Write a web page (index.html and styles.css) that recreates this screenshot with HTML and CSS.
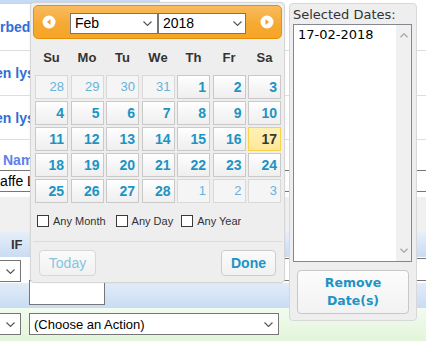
FILE: index.html
```html
<!DOCTYPE html>
<html lang="en">
<head>
  <meta charset="UTF-8" />
  <title>Date picker</title>
  <link rel="stylesheet" href="styles.css">
</head>
<body>
  <!-- page behind the popup -->
  <div class="page">
    <div class="topbar"></div>
    <div class="field-row row-1"><span class="field-label">Absorbed</span></div>
    <div class="field-row row-2"><span class="field-label">Taken lysis</span></div>
    <div class="field-row row-3"><span class="field-label">Taken lysis</span></div>
    <div class="name-block">
      <div class="name-label">Name</div>
      <div class="text-input">Caffe L</div>
    </div>
    <div class="gray-band"></div>
    <div class="grid-head"><span class="grid-th">IF</span></div>
    <div class="grid-row row-white">
      <div class="sel sel-small"><span></span><svg class="chev" viewBox="0 0 9 5"><polyline points="0.5,0.5 4.5,4.5 8.5,0.5"/></svg></div>
      <div class="wide-input"></div>
    </div>
    <div class="grid-row row-blue">
      <div class="white-box"></div>
    </div>
    <div class="grid-row row-green">
      <div class="sel sel-small"><span></span><svg class="chev" viewBox="0 0 9 5"><polyline points="0.5,0.5 4.5,4.5 8.5,0.5"/></svg></div>
      <div class="sel sel-action"><span>(Choose an Action)</span><svg class="chev" viewBox="0 0 9 5"><polyline points="0.5,0.5 4.5,4.5 8.5,0.5"/></svg></div>
    </div>
  </div>

  <!-- DATEPICKER POPUP -->
  <div class="dp">
    <div class="dp-header">
      <span class="dp-nav dp-prev"><svg viewBox="0 0 14 14"><circle cx="7" cy="7" r="6.5"/><polygon points="8.5,4 8.5,10 5,7"/></svg></span>
      <div class="sel sel-month"><span>Feb</span><svg class="chev" viewBox="0 0 9 5"><polyline points="0.5,0.5 4.5,4.5 8.5,0.5"/></svg></div>
      <div class="sel sel-year"><span>2018</span><svg class="chev" viewBox="0 0 9 5"><polyline points="0.5,0.5 4.5,4.5 8.5,0.5"/></svg></div>
      <span class="dp-nav dp-next"><svg viewBox="0 0 14 14"><circle cx="7" cy="7" r="6.5"/><polygon points="5.5,4 5.5,10 9,7"/></svg></span>
    </div>

    <div class="dp-days">
      <span>Su</span><span>Mo</span><span>Tu</span><span>We</span><span>Th</span><span>Fr</span><span>Sa</span>
    </div>

    <div class="dp-dates">
      <span class="d other">28</span><span class="d other">29</span><span class="d other">30</span><span class="d other">31</span><span class="d">1</span><span class="d">2</span><span class="d">3</span>
      <span class="d">4</span><span class="d">5</span><span class="d">6</span><span class="d">7</span><span class="d">8</span><span class="d">9</span><span class="d">10</span>
      <span class="d">11</span><span class="d">12</span><span class="d">13</span><span class="d">14</span><span class="d">15</span><span class="d">16</span><span class="d today">17</span>
      <span class="d">18</span><span class="d">19</span><span class="d">20</span><span class="d">21</span><span class="d">22</span><span class="d">23</span><span class="d">24</span>
      <span class="d">25</span><span class="d">26</span><span class="d">27</span><span class="d">28</span><span class="d other">1</span><span class="d other">2</span><span class="d other">3</span>
    </div>

    <div class="dp-options">
      <label class="opt"><span class="cb"></span>Any Month</label>
      <label class="opt"><span class="cb"></span>Any Day</label>
      <label class="opt"><span class="cb"></span>Any Year</label>
    </div>

    <div class="dp-buttons">
      <span class="btn btn-today">Today</span>
      <span class="btn btn-done">Done</span>
    </div>
  </div>

  <!-- SELECTED DATES PANEL -->
  <div class="sel-panel">
    <div class="sel-title">Selected Dates:</div>
    <div class="listbox">
      <div class="list-items"><div class="list-item">17-02-2018</div></div>
      <div class="list-scroll">
        <svg viewBox="0 0 9 5"><polyline points="0.5,4.5 4.5,0.5 8.5,4.5"/></svg>
        <svg viewBox="0 0 9 5"><polyline points="0.5,0.5 4.5,4.5 8.5,0.5"/></svg>
      </div>
    </div>
    <div class="remove-btn"><span>Remove</span><span>Date(s)</span></div>
  </div>
</body>
</html>
```

FILE: styles.css
```css
/* BASE */
* { box-sizing: border-box; }
body {
  margin: 0;
  width: 426px; height: 341px;
  overflow: hidden;
  position: relative;
  background: #fff;
  font-family: "Liberation Sans", Arial, sans-serif;
  color: #000;
}

/* PAGE BEHIND */
.page { margin-left: -60px; width: 540px; }
.topbar {
  width: 220px; height: 4px;
  background: #c6dbf4;
  border-bottom: 1px solid #d4d4d4;
}
.field-row {
  display: flex; align-items: center;
  border-bottom: 1px solid #dedede;
  font-size: 14px; font-weight: bold;
  color: #2f6fd5;
  white-space: nowrap;
}
.row-1 { height: 47px; padding-left: 25px; }
.row-2 { height: 45px; padding-left: 32px; }
.row-3 { height: 44px; padding-left: 32px; }

.name-block { height: 57px; padding-top: 12px; }
.name-label {
  padding-left: 63px;
  font-size: 14px; font-weight: bold;
  line-height: 16px;
  color: #5b80f0;
}
.text-input {
  margin: 2px 0 0 46px;
  width: 480px; height: 22px;
  border: 1px solid #767676;
  padding-left: 3px;
  font-size: 14px; line-height: 20px;
  white-space: nowrap; overflow: hidden;
}
.gray-band { height: 35px; background: #f0f0f0; }
.grid-head {
  height: 25px;
  padding-left: 71px;
  background: linear-gradient(#e6eff9, #c9dcf3);
  font-size: 13px; font-weight: bold;
  line-height: 25px; color: #333;
}
.grid-row { display: flex; align-items: flex-start; }
.row-white { height: 26px; background: #fff; }
.row-blue {
  height: 25px;
  background: linear-gradient(#e2ecf9, #c9dcf3);
}
.row-green {
  height: 33px; padding-top: 5px;
  background: linear-gradient(#f2fbef, #e2f5da);
}
.wide-input {
  margin: 1px 0 0 219px;
  width: 200px; height: 23px;
  border: 1px solid #767676;
  background: #fff;
}
.white-box {
  margin: -3px 0 0 89px;
  width: 76px; height: 25px;
  border: 1px solid #777;
  background: #fff;
}

/* SELECT LOOK */
.sel {
  display: flex; align-items: center;
  justify-content: space-between;
  height: 22px;
  border: 1px solid #767676;
  background: #fff;
  padding: 0 5px 0 4px;
  font-size: 14px;
  white-space: nowrap;
}
.chev { width: 9px; height: 5px; flex: none; }
.chev polyline { fill: none; stroke: #555; stroke-width: 1.1; }
.row-white .sel-small { margin: 3px 0 0 20px; width: 61px; }
.row-green .sel-small { margin-left: 20px; width: 61px; }
.sel-action {
  margin-left: 8px; width: 250px;
  font-size: 13px;
}

/* DATEPICKER */
.dp {
  position: absolute; top: 2px; left: 30px;
  width: 255px; height: 281px;
  padding: 2px;
  border: 1px solid #d6d6d6;
  border-radius: 4px;
  background: #eee;
  box-shadow: 0 0 2px rgba(0,0,0,0.08);
}
.dp-header {
  display: flex; align-items: center;
  height: 34px;
  border: 1px solid #e78f08;
  border-radius: 5px;
  background: linear-gradient(#f9bb5e, #f6aa33 55%, #f5a526);
}
.dp-nav { width: 14px; height: 14px; flex: none; }
.dp-nav svg { width: 14px; height: 14px; display: block; }
.dp-nav circle { fill: #fff; }
.dp-nav polygon { fill: #f2a12c; }
.dp-prev { margin: 0 14px 0 8px; }
.dp-next { margin-left: 14px; }
.sel-month, .sel-year { width: 88px; height: 21px; margin-top: 2px; }
.sel-month { padding-right: 5px; }
.sel-year { padding-right: 3px; }

.dp-days, .dp-dates {
  display: grid;
  grid-template-columns: repeat(7, 1fr);
  column-gap: 2.5px;
  padding: 0 1px 0 2px;
}
.dp-days {
  margin-top: 4px; height: 28px;
  align-items: center; text-align: center;
  font-size: 13px; font-weight: bold;
  color: #333;
}
.dp-dates {
  margin-top: 4px;
  grid-auto-rows: 24px;
  row-gap: 2px;
}
.d {
  border: 1px solid #c9c9c9;
  background: linear-gradient(#fff, #f6f6f6 50%, #efefef);
  text-align: right;
  padding-right: 3px;
  font-size: 14px; font-weight: bold;
  line-height: 22px;
  color: #1c94c4;
}
.d.other {
  border-color: #d9d9d9;
  background: #f5f5f5;
  font-weight: normal;
  font-size: 13px;
  color: #66b3da;
}
.d.today {
  border-color: #fbd34a;
  background: linear-gradient(#fff1b3, #fee79a);
  color: #363636;
}

.dp-options {
  display: flex; align-items: center;
  margin-top: 10px; height: 16px;
  padding-left: 4px;
  font-size: 11px; color: #333;
}
.opt { display: flex; align-items: center; margin-right: 10px; }
.opt:nth-child(2) { margin-right: 8px; }
.cb {
  width: 12px; height: 12px;
  border: 1px solid #3a3a3a;
  background: #fff;
  margin-right: 4px;
}

.dp-buttons {
  display: flex; justify-content: space-between;
  margin-top: 12px;
  padding: 8px 6px 0;
  border-top: 1px solid #dcdcdc;
}
.btn {
  display: flex; align-items: center; justify-content: center;
  height: 26px;
  border: 1px solid #ccc;
  border-radius: 4px;
  background: linear-gradient(#fbfbfb, #f1f1f1);
  font-size: 14px;
}
.btn-today { width: 57px; color: #86c4e0; border-color: #d8d8d8; }
.btn-done { width: 55px; font-weight: bold; color: #1c94c4; }

/* SELECTED DATES PANEL */
.sel-panel {
  position: absolute; top: 3px; left: 289px;
  width: 128px; height: 318px;
  padding: 3px 4px 3px 3px;
  border: 1px solid #d8d8d8;
  border-radius: 4px;
  background: #eee;
  font-family: "DejaVu Sans", Verdana, sans-serif;
}
.sel-title { font-size: 13px; line-height: 16px; color: #333; }
.listbox {
  display: flex;
  margin-top: 1px; height: 238px;
  border: 1px solid #828790;
  background: #fff;
}
.list-items { flex: 1; padding: 2px 4px; }
.list-item { font-size: 13px; line-height: 16px; }
.list-scroll {
  width: 15px;
  display: flex; flex-direction: column;
  justify-content: space-between; align-items: center;
  padding: 8px 0 8px;
  background: #f0f0f0;
}
.list-scroll svg { width: 8px; height: 5px; }
.list-scroll polyline { fill: none; stroke: #a6a6a6; stroke-width: 1.3; }
.remove-btn {
  display: flex; flex-direction: column;
  align-items: center; justify-content: center;
  margin: 8px 3px 0 4px;
  height: 44px;
  border: 1px solid #c8c8c8;
  border-radius: 4px;
  background: linear-gradient(#fcfcfc, #f2f2f2);
  font-size: 12.5px; font-weight: bold;
  line-height: 18px;
  color: #1c94c4;
}
```
